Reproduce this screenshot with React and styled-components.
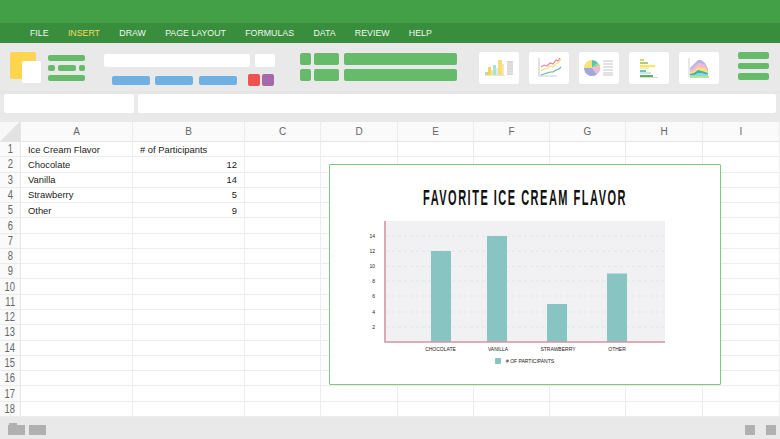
import React from 'react';
import styled, { createGlobalStyle } from 'styled-components';

const GlobalStyle = createGlobalStyle`
  html, body { margin: 0; padding: 0; background: #fff; }
  body { font-family: "Liberation Sans", Arial, sans-serif; }
`;

const menuItems = ['FILE', 'INSERT', 'DRAW', 'PAGE LAYOUT', 'FORMULAS', 'DATA', 'REVIEW', 'HELP'];
const columns = ['A', 'B', 'C', 'D', 'E', 'F', 'G', 'H', 'I'];
const rows = [
  ['Ice Cream Flavor', '# of Participants'],
  ['Chocolate', 12],
  ['Vanilla', 14],
  ['Strawberry', 5],
  ['Other', 9],
];
const bars = [
  { label: 'CHOCOLATE', x: 431, top: 251, labelX: 440.5 },
  { label: 'VANILLA', x: 487, top: 236, labelX: 498 },
  { label: 'STRAWBERRY', x: 547, top: 304, labelX: 558 },
  { label: 'OTHER', x: 607, top: 273.5, labelX: 617 },
];
const ticks = [[14, 236], [12, 251], [10, 266.5], [8, 281], [6, 296], [4, 312], [2, 327]];

const Page = styled.div`
  position: relative;
  width: 780px;
  height: 439px;
  overflow: hidden;
  background: #e9e9e9;
`;

const TitleBar = styled.div`
  height: 23px;
  background: #43a047;
`;

const MenuBar = styled.nav`
  height: 20px;
  background: #388e3c;
  display: flex;
  align-items: center;
  gap: 19.3px;
  padding-left: 30px;
`;

const MenuItem = styled.span`
  font-size: 8.8px;
  color: ${(props) => (props.$active ? '#fdd663' : '#f1f8f1')};
`;

const Ribbon = styled.div`
  height: 48px;
  display: flex;
  align-items: flex-start;
  padding: 9px 0 0 10px;
  box-sizing: border-box;
`;

const Logo = styled.div`
  position: relative;
  width: 31px;
  height: 31px;
  flex: none;
`;

const LogoBack = styled.div`
  width: 26px;
  height: 27px;
  background: #ffd54f;
  border-radius: 2px;
`;

const LogoFront = styled.div`
  position: absolute;
  left: 12px;
  top: 9px;
  width: 19px;
  height: 22px;
  background: #fff;
  border-radius: 2px;
`;

const Stack = styled.div`
  display: flex;
  flex-direction: column;
  gap: ${(props) => props.$gap || 4}px;
  margin-left: ${(props) => props.$left || 0}px;
  padding-top: ${(props) => props.$top || 0}px;
  flex: none;
`;

const Row = styled.div`
  display: flex;
  align-items: center;
  gap: ${(props) => props.$gap || 3}px;
  padding-left: ${(props) => props.$left || 0}px;
`;

const Block = styled.div`
  width: ${(props) => props.$w}px;
  height: ${(props) => props.$h}px;
  margin-left: ${(props) => props.$left || 0}px;
  background: ${(props) => props.$color || '#66bb6a'};
  border-radius: ${(props) => props.$radius || 2}px;
  flex: none;
`;

const Tiles = styled.div`
  display: flex;
  gap: 10px;
  margin-left: 22px;
`;

const Tile = styled.div`
  width: 40px;
  height: 32px;
  background: #fff;
  border-radius: 2px;
  flex: none;
`;

const FormulaRow = styled.div`
  height: 31px;
  display: flex;
  gap: 4px;
  padding: 3px 4px 0;
  box-sizing: border-box;
  background: linear-gradient(#e4e4e4, #e9e9e9 4px);
`;

const Field = styled.div`
  height: 19px;
  width: ${(props) => (props.$grow ? 'auto' : `${props.$w}px`)};
  flex: ${(props) => (props.$grow ? 1 : 'none')};
  background: #fff;
  border-radius: 2px;
`;

const Sheet = styled.div`
  display: grid;
  grid-template-columns: 21px 112px 112px 76px 77px 76px 76px 76px 77px 77px;
  grid-template-rows: 20px repeat(18, 1fr);
  height: 295px;
  background: #fff;
`;

const Corner = styled.div`
  background: linear-gradient(135deg, #f7f7f7 50%, #e2e2e2 50%);
  border-right: 1px solid #e6e6e6;
  border-bottom: 1px solid #e6e6e6;
`;

const ColumnHead = styled.div`
  display: flex;
  align-items: center;
  justify-content: center;
  background: #fafafa;
  border-right: 1px solid #ececec;
  border-bottom: 1px solid #e6e6e6;
  font-size: 10px;
  color: #666;
`;

const RowHead = styled.div`
  display: flex;
  align-items: center;
  justify-content: center;
  background: #fafafa;
  border-right: 1px solid #e6e6e6;
  border-bottom: 1px solid #ececec;
  color: #666;
`;

const RowNumber = styled.span`
  display: inline-block;
  font-size: 12px;
  transform: scaleX(0.78);
`;

const Cell = styled.div`
  display: flex;
  align-items: center;
  justify-content: ${(props) => (props.$number ? 'flex-end' : 'flex-start')};
  padding: ${(props) => (props.$number ? '0 7px 0 0' : '0 0 0 7px')};
  border-right: 1px solid #ececec;
  border-bottom: 1px solid #ececec;
  font-size: 9.4px;
  color: #222;
  white-space: nowrap;
  overflow: hidden;
`;

const StatusBar = styled.div`
  height: 22px;
  display: flex;
  align-items: flex-start;
  gap: 4px;
  padding: 7px 4px 0 8px;
  box-sizing: border-box;
`;

const Folder = styled.div`
  position: relative;
  width: 17px;
  height: 10px;
  margin-top: 1px;
  background: #b0b0b0;
  &::before {
    content: '';
    position: absolute;
    left: 1px;
    top: -2px;
    width: 8px;
    height: 2px;
    background: #b0b0b0;
  }
`;

const Sheets = styled.div`
  width: 17px;
  height: 10px;
  margin-top: 1px;
  background: #b0b0b0;
`;

const StatusRight = styled.div`
  margin-left: auto;
  display: flex;
  gap: 11px;
  margin-top: 1px;
`;

const StatusBox = styled.div`
  width: 10px;
  height: 10px;
  background: #b0b0b0;
`;

const ChartCard = styled.div`
  position: absolute;
  left: 329px;
  top: 164px;
  width: 392px;
  height: 221px;
  box-sizing: border-box;
  background: #fff;
  border: 1.5px solid #81c784;
  border-radius: 1px;
`;

const ChartTitle = styled.h2`
  display: flex;
  justify-content: center;
  margin: 21px 0 0;
  white-space: nowrap;
  font-weight: 700;
  font-size: 22px;
  line-height: 24px;
  letter-spacing: 3px;
  color: #111;
  transform: scaleX(0.5);
`;

const ChartSvg = styled.svg`
  position: absolute;
  left: -1.5px;
  top: -1.5px;
`;

const TinyLabel = styled.text`
  font-family: "Liberation Sans", sans-serif;
  font-size: ${(props) => props.$size || 5}px;
  fill: #222;
`;

const BarIcon = () => (
  <svg width="40" height="32" viewBox="0 0 40 32">
    <rect x="6" y="20" width="3" height="3" fill="#b9dca0" />
    <rect x="9" y="15" width="3" height="8" fill="#fbd44f" />
    <rect x="12" y="18" width="2" height="5" fill="#f6e89a" />
    <rect x="14" y="13" width="3" height="10" fill="#a8e0e0" />
    <rect x="17" y="16" width="2" height="7" fill="#d6eef0" />
    <rect x="19" y="8" width="4" height="15" fill="#f8dc78" />
    <rect x="23" y="12" width="2" height="11" fill="#f3e9b0" />
    <rect x="6" y="23" width="20" height="1" fill="#e4e8d8" />
    <rect x="28" y="9" width="6" height="14" fill="#d8d8d8" />
    <path d="M28 12h6M28 15h6M28 18h6M28 21h6" stroke="#eee" strokeWidth="0.7" />
  </svg>
);

const LineIcon = () => (
  <svg width="40" height="32" viewBox="0 0 40 32" fill="none">
    <path d="M10 6v18h18" stroke="#cfcfcf" strokeWidth="1.2" />
    <path d="M12 15l3 -2 3 1 3 -3 3 1 3 -4 2 1 2 -3" stroke="#ef7fa5" strokeWidth="1.1" />
    <path d="M12 19l3 -2 3 0 3 -3 3 1 3 -3 3 -2 2 -3" stroke="#f8e27a" strokeWidth="1.1" />
    <path d="M12 23l3 -1 3 -1 3 -1 3 0 3 -2 3 -1 2 -2" stroke="#55b6ad" strokeWidth="1.1" />
  </svg>
);

const PieIcon = () => (
  <svg width="40" height="32" viewBox="0 0 40 32">
    <path d="M13 16V8a8 8 0 0 1 6 2.7z" fill="#5fc0b4" />
    <path d="M13 16l6 -5.3a8 8 0 0 1 2 3.3z" fill="#a8d68a" />
    <path d="M13 16l8 -2a8 8 0 0 1 -3 8.2z" fill="#f5b8d0" />
    <path d="M13 16l5 6.2a8 8 0 0 1 -13 -6.2z" fill="#a3a8dc" />
    <path d="M13 16H5a8 8 0 0 1 8 -8z" fill="#f8e27a" />
    <path d="M24 9h10M24 12h10M24 15h10M24 18h10M24 21h10M24 23h10" stroke="#c4c4c4" strokeWidth="1" />
  </svg>
);

const HBarIcon = () => (
  <svg width="40" height="32" viewBox="0 0 40 32">
    <rect x="11" y="7" width="4" height="2" fill="#fbc94f" />
    <rect x="11" y="10" width="8" height="2" fill="#a5cf88" />
    <rect x="11" y="13" width="15" height="2" fill="#f8e75f" />
    <rect x="11" y="15" width="9" height="2" fill="#f6efa8" />
    <rect x="11" y="18" width="6" height="2" fill="#6cc3bb" />
    <rect x="11" y="20" width="11" height="2" fill="#bdeaea" />
    <rect x="11" y="23" width="13" height="2" fill="#62ad62" />
    <rect x="11" y="25" width="18" height="1" fill="#d8d8d8" />
  </svg>
);

const AreaIcon = () => (
  <svg width="40" height="32" viewBox="0 0 40 32">
    <path d="M10 6v19" stroke="#d8d8d8" strokeWidth="1.2" />
    <path d="M11 25v-9l4 -4 4 -4h3l4 3 3 6v8z" fill="#b5b5e6" />
    <path d="M11 25v-7l4 -3 4 -4h3l4 2 3 6v6z" fill="#f5b8d0" />
    <path d="M11 25v-5l4 -1 4 -4 4 1 3 0 3 4v5z" fill="#f8e27a" />
    <path d="M11 25v-3l4 -1 4 -3 4 1 3 1 3 1v4z" fill="#3fb3a6" />
    <path d="M11 25v-2l4 0 4 -2h4l3 1 3 0v3z" fill="#86dbe2" />
    <rect x="11" y="24" width="19" height="2" fill="#bfe0a0" />
  </svg>
);

const App = () => {
  return (
    <Page>
      <GlobalStyle />
      <TitleBar />
      <MenuBar>
        {menuItems.map((item) => (
          <MenuItem key={item} $active={item === 'INSERT'}>{item}</MenuItem>
        ))}
      </MenuBar>

      <Ribbon>
        <Logo>
          <LogoBack />
          <LogoFront />
        </Logo>
        <Stack $left={7} $top={3} $gap={4}>
          <Block $w={37} $h={6} />
          <Row $gap={3}>
            <Block $w={7} $h={6} />
            <Block $w={18} $h={6} />
            <Block $w={6} $h={6} />
          </Row>
          <Block $w={37} $h={6} />
        </Stack>
        <Stack $left={19} $top={2} $gap={7}>
          <Row $gap={5}>
            <Block $w={146} $h={13} $color="#fff" />
            <Block $w={20} $h={13} $color="#fff" />
          </Row>
          <Row $gap={5} $left={8}>
            <Block $w={38} $h={9} $color="#6fb1e3" />
            <Block $w={38} $h={9} $color="#6fb1e3" />
            <Block $w={38} $h={9} $color="#6fb1e3" $left={1} />
            <Block $w={12} $h={12} $color="#ef5350" $left={6} />
            <Block $w={12} $h={12} $color="#a569a9" $left={-3} />
          </Row>
        </Stack>
        <Stack $left={25} $top={1} $gap={4}>
          <Row $gap={3}>
            <Block $w={11} $h={12} />
            <Block $w={25} $h={12} />
            <Block $w={113} $h={12} $left={2} />
          </Row>
          <Row $gap={3}>
            <Block $w={11} $h={12} />
            <Block $w={25} $h={12} />
            <Block $w={113} $h={12} $left={2} />
          </Row>
        </Stack>
        <Tiles>
          <Tile><BarIcon /></Tile>
          <Tile><LineIcon /></Tile>
          <Tile><PieIcon /></Tile>
          <Tile><HBarIcon /></Tile>
          <Tile><AreaIcon /></Tile>
        </Tiles>
        <Stack $left={19} $gap={4}>
          <Block $w={31} $h={7} />
          <Block $w={31} $h={6} />
          <Block $w={31} $h={7} />
        </Stack>
      </Ribbon>

      <FormulaRow>
        <Field $w={130} />
        <Field $grow />
      </FormulaRow>

      <Sheet>
        <Corner />
        {columns.map((col) => (
          <ColumnHead key={col}>{col}</ColumnHead>
        ))}
        {Array.from({ length: 18 }).map((_, rowIndex) => (
          <React.Fragment key={rowIndex}>
            <RowHead><RowNumber>{rowIndex + 1}</RowNumber></RowHead>
            {columns.map((col, colIndex) => {
              const value = rows[rowIndex] ? rows[rowIndex][colIndex] : undefined;
              return (
                <Cell key={col} $number={typeof value === 'number'}>{value}</Cell>
              );
            })}
          </React.Fragment>
        ))}
      </Sheet>

      <StatusBar>
        <Folder />
        <Sheets />
        <StatusRight>
          <StatusBox />
          <StatusBox />
        </StatusRight>
      </StatusBar>

      <ChartCard>
        <ChartTitle>FAVORITE ICE CREAM FLAVOR</ChartTitle>
        <ChartSvg width="392" height="221" viewBox="329 164 392 221">
          <rect x="385" y="221" width="280" height="121" fill="#f1f1f3" />
          {ticks.map(([value, y]) => (
            <g key={value}>
              <line x1="386" x2="664" y1={y} y2={y} stroke="#dde6e4" strokeWidth="0.8" strokeDasharray="3 3" />
              <TinyLabel x="375" y={y + 1.8} textAnchor="end">{value}</TinyLabel>
            </g>
          ))}
          {bars.map((bar) => (
            <g key={bar.label}>
              <rect x={bar.x} y={bar.top} width="20" height={342 - bar.top} fill="#88c5c2" />
              <TinyLabel x={bar.labelX} y="351" textAnchor="middle">{bar.label}</TinyLabel>
            </g>
          ))}
          <path d="M385 221V342H665" fill="none" stroke="#cf96a5" strokeWidth="1.6" />
          <rect x="495" y="358" width="6" height="6" rx="1" fill="#88c5c2" />
          <TinyLabel x="506" y="363">{'# OF PARTICIPANTS'}</TinyLabel>
        </ChartSvg>
      </ChartCard>
    </Page>
  );
};

export default App;
